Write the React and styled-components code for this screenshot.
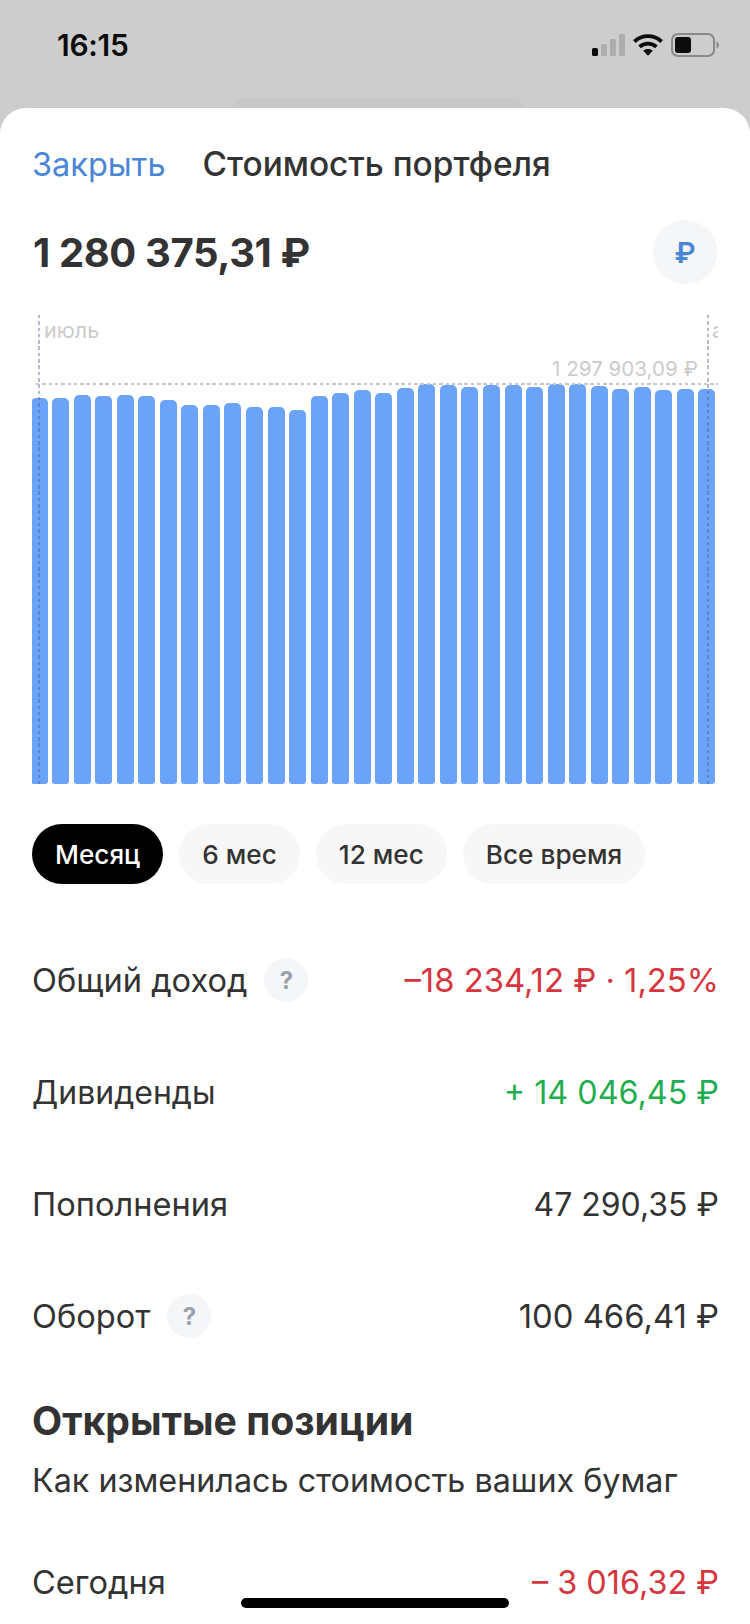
import React from "react";
import styled, { createGlobalStyle } from "styled-components";

const Global = createGlobalStyle`
  html, body { margin: 0; padding: 0; background: #cdcdcd; }
  body { font-family: Inter, "Noto Sans", sans-serif; }
`;

const Screen = styled.div`
  position: relative;
  width: 750px;
  height: 1624px;
  overflow: hidden;
  background: #cdcdcd;
  display: flex;
  flex-direction: column;
`;

const StatusBar = styled.header`
  height: 98px;
  flex: none;
  display: flex;
  align-items: center;
  justify-content: space-between;
  padding: 0 31px 8px 57px;
  box-sizing: border-box;
`;

const Time = styled.span`
  font-size: 30px;
  font-weight: 600;
  color: #0c0c0c;
  letter-spacing: -0.3px;
`;

const StatusIcons = styled.div`
  display: flex;
  align-items: center;
  gap: 8px;
`;

const BehindCard = styled.div`
  flex: none;
  height: 10px;
  width: 290px;
  margin-left: 233px;
  background: #c8c8c8;
  border-radius: 20px 20px 0 0;
`;

const Sheet = styled.main`
  flex: 1;
  background: #fff;
  border-radius: 26px 26px 0 0;
  padding: 0 33px;
  display: flex;
  flex-direction: column;
  color: #333;
`;

const TitleBar = styled.div`
  height: 112px;
  flex: none;
  display: flex;
  align-items: center;
  gap: 37px;
`;

const CloseLink = styled.span`
  font-size: 32.5px;
  color: #4a86d6;
  margin-left: -1px;
`;

const SheetTitle = styled.h1`
  margin: 0;
  font-size: 33.4px;
  font-weight: 500;
  color: #333;
`;

const AmountRow = styled.div`
  height: 64px;
  flex: none;
  display: flex;
  align-items: center;
  justify-content: space-between;
`;

const Amount = styled.div`
  font-size: 40px;
  font-weight: 700;
  color: #333;
  letter-spacing: -0.4px;
`;

const CurrencyButton = styled.div`
  width: 64px;
  height: 64px;
  border-radius: 50%;
  background: #f5f6f8;
  color: #4a86d6;
  font-size: 29px;
  font-weight: 600;
  display: flex;
  align-items: center;
  justify-content: center;
`;

const Chart = styled.div`
  position: relative;
  flex: none;
  height: 469px;
  margin: 31px -1px 0;
  overflow: hidden;
`;

const Bars = styled.div`
  position: absolute;
  inset: 0;
  left: -1.5px;
  display: grid;
  grid-template-columns: repeat(32, 17px);
  column-gap: 4.55px;
  align-items: end;
`;

const Bar = styled.div`
  height: ${(p) => p.$h}px;
  background: #6ba3f8;
  border-radius: 5px 5px 3px 3px;
`;

const VLine = styled.div`
  position: absolute;
  top: 0;
  bottom: 0;
  left: ${(p) => p.$x}px;
  width: 2px;
  background: repeating-linear-gradient(
    to bottom,
    rgba(80, 95, 125, 0.42) 0 3.5px,
    transparent 3.5px 6.3px
  );
`;

const HLine = styled.div`
  position: absolute;
  left: 4px;
  right: 0;
  top: 68px;
  height: 2px;
  background: repeating-linear-gradient(
    to right,
    #c6c6c6 0 3.5px,
    transparent 3.5px 6.3px
  );
`;

const MonthLabel = styled.span`
  position: absolute;
  top: 3px;
  left: ${(p) => p.$x}px;
  font-size: 21.5px;
  color: #cbcbcb;
  line-height: 24px;
`;

const MaxLabel = styled.span`
  position: absolute;
  top: 42px;
  right: 20px;
  font-size: 20.6px;
  color: #cbcbcb;
  line-height: 24px;
`;

const Periods = styled.div`
  flex: none;
  margin: 40px -1px 0;
  display: flex;
  gap: 16px;
`;

const Period = styled.button`
  height: 60px;
  padding: 0 23px;
  border: 0;
  border-radius: 30px;
  font: 500 26.2px Inter, sans-serif;
  background: ${(p) => (p.$active ? "#000" : "#f7f7f7")};
  color: ${(p) => (p.$active ? "#fff" : "#333")};
`;

const Stats = styled.div`
  flex: none;
  margin-top: 40px;
  display: flex;
  flex-direction: column;
`;

const Row = styled.div`
  height: 112px;
  flex: none;
  margin: 0 -2px 0 -1px;
  display: flex;
  align-items: center;
  justify-content: space-between;
`;

const RowLabel = styled.div`
  display: flex;
  align-items: center;
  gap: 17px;
  font-size: ${(p) => p.$size || 32.6}px;
  color: #333;
`;

const Help = styled.span`
  width: 44px;
  height: 44px;
  border-radius: 50%;
  background: #f5f6f8;
  color: #9aa0a8;
  font-size: 24px;
  font-weight: 700;
  display: flex;
  align-items: center;
  justify-content: center;
`;

const Value = styled.div`
  font-size: ${(p) => p.$size || 32.8}px;
  color: ${(p) => p.$color || "#333"};
`;

const SectionTitle = styled.h2`
  margin: 0 0 0 -1px;
  font-size: 39.2px;
  font-weight: 700;
  line-height: 44px;
  color: #333;
`;

const SectionNote = styled.p`
  margin: 16px 0 0 -1px;
  font-size: 32.3px;
  line-height: 44px;
  color: #333;
`;

const Section = styled.section`
  flex: none;
  margin: 27px 0 23px;
`;

const HomeIndicator = styled.div`
  position: absolute;
  left: 241px;
  bottom: 16px;
  width: 268px;
  height: 10px;
  border-radius: 5px;
  background: #000;
`;

const tops = [398,398,395,396,395.3,396,400,405.3,405,403.3,407,407,410,396,393,390,393,388,384,385.3,386.7,385,385.3,386.7,384,384,385.7,389.3,386.7,390,389,389.3];

const SignalIcon = () => (
  <svg width="33" height="22" viewBox="0 0 33 22">
    <rect x="0" y="14" width="6" height="8" rx="1.5" fill="#0c0c0c" />
    <rect x="9" y="10" width="6" height="12" rx="1.5" fill="#adadad" />
    <rect x="18" y="5" width="6" height="17" rx="1.5" fill="#adadad" />
    <rect x="27" y="0" width="6" height="22" rx="1.5" fill="#adadad" />
  </svg>
);

const WifiIcon = () => (
  <svg width="30" height="22" viewBox="0 0 30 22" fill="none" stroke="#0c0c0c" strokeWidth="3.8">
    <path d="M1.4 7.6C9 .4 21 .4 28.6 7.6" />
    <path d="M6.6 12.8c4.6-4.3 12.2-4.3 16.8 0" />
    <path d="M15 21.8l-4.8-5c2.6-2.4 7-2.4 9.6 0z" fill="#0c0c0c" stroke="none" />
  </svg>
);

const BatteryIcon = () => (
  <svg width="48" height="24" viewBox="0 0 48 24">
    <rect x="1" y="1" width="42" height="22" rx="6" fill="none" stroke="#8a8a8a" strokeWidth="2" />
    <rect x="4" y="4" width="16" height="16" rx="3" fill="#0c0c0c" />
    <path d="M45.5 8.5c1.6.6 2.5 2 2.5 3.5s-.9 2.9-2.5 3.5z" fill="#8a8a8a" />
  </svg>
);

export default function App() {
  return (
    <Screen>
      <Global />
      <StatusBar>
        <Time>16:15</Time>
        <StatusIcons>
          <SignalIcon />
          <WifiIcon />
          <BatteryIcon />
        </StatusIcons>
      </StatusBar>
      <BehindCard />
      <Sheet>
        <TitleBar>
          <CloseLink>Закрыть</CloseLink>
          <SheetTitle>Стоимость портфеля</SheetTitle>
        </TitleBar>
        <AmountRow>
          <Amount>1 280 375,31 ₽</Amount>
          <CurrencyButton>₽</CurrencyButton>
        </AmountRow>
        <Chart>
          <Bars>
            {tops.map((t, i) => (
              <Bar key={i} $h={784 - t} />
            ))}
          </Bars>
          <VLine $x={6} />
          <VLine $x={675} />
          <HLine />
          <MonthLabel $x={12}>июль</MonthLabel>
          <MonthLabel $x={680}>а</MonthLabel>
          <MaxLabel>1 297 903,09 ₽</MaxLabel>
        </Chart>
        <Periods>
          <Period $active>Месяц</Period>
          <Period>6 мес</Period>
          <Period>12 мес</Period>
          <Period>Все время</Period>
        </Periods>
        <Stats>
          <Row>
            <RowLabel>Общий доход<Help>?</Help></RowLabel>
            <Value $color="#d6363e">–18 234,12 ₽ · 1,25%</Value>
          </Row>
          <Row>
            <RowLabel $size={32}>Дивиденды</RowLabel>
            <Value $color="#1fae4f" $size={32.3}>+ 14 046,45 ₽</Value>
          </Row>
          <Row>
            <RowLabel>Пополнения</RowLabel>
            <Value $size={32}>47 290,35 ₽</Value>
          </Row>
          <Row>
            <RowLabel>Оборот<Help>?</Help></RowLabel>
            <Value>100 466,41 ₽</Value>
          </Row>
        </Stats>
        <Section>
          <SectionTitle>Открытые позиции</SectionTitle>
          <SectionNote>Как изменилась стоимость ваших бумаг</SectionNote>
        </Section>
        <Row>
          <RowLabel>Сегодня</RowLabel>
          <Value $color="#d6363e" $size={32.4}>– 3 016,32 ₽</Value>
        </Row>
      </Sheet>
      <HomeIndicator />
    </Screen>
  );
}
